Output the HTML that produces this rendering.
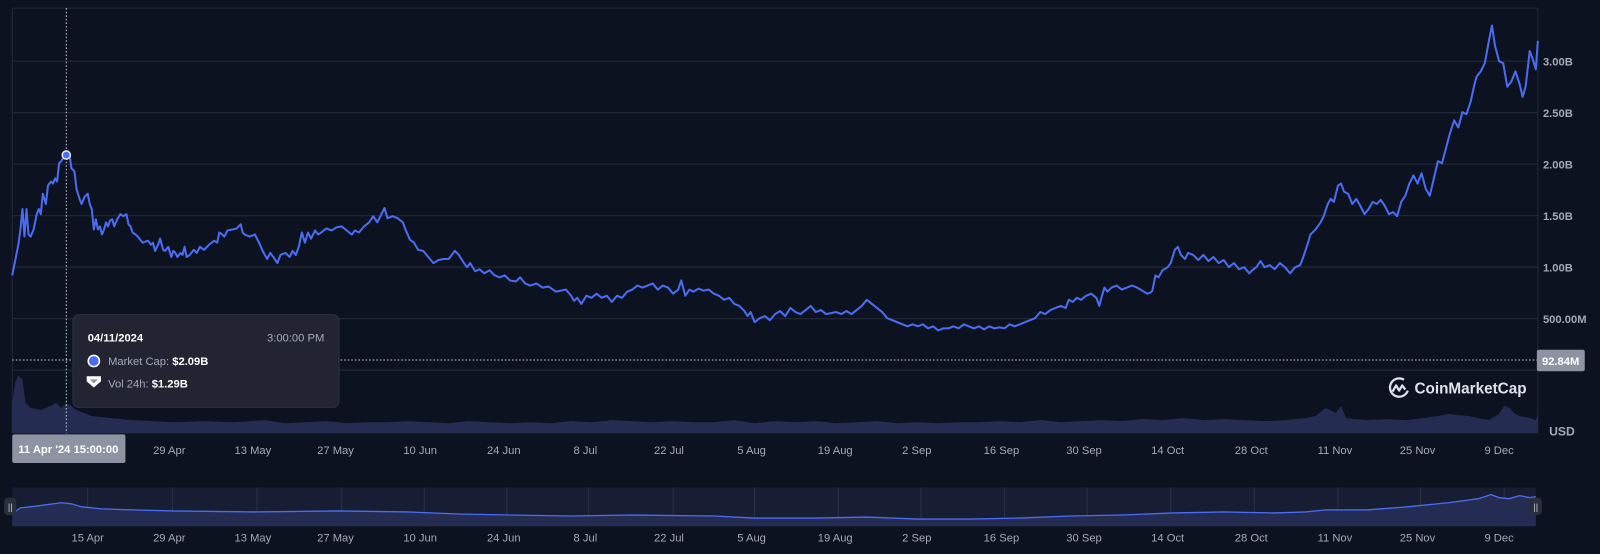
<!DOCTYPE html>
<html><head><meta charset="utf-8"><style>
html,body{margin:0;padding:0;background:#0d1220;width:1600px;height:554px;overflow:hidden}
#w{width:1569px;height:543px;transform:scale(1.0198);transform-origin:0 0;position:relative;font-family:"Liberation Sans",sans-serif}
svg text{font-family:"Liberation Sans",sans-serif}
</style></head><body><div id="w">
<svg width="1569" height="543" viewBox="0 0 1569 543" xmlns="http://www.w3.org/2000/svg">
<rect width="1569" height="543" fill="#0d1220"/>
<g stroke="#232938" stroke-width="1">
<line x1="12" y1="8" x2="1508" y2="8"/>
<line x1="12" y1="60" x2="1508" y2="60"/>
<line x1="12" y1="110.5" x2="1508" y2="110.5"/>
<line x1="12" y1="161" x2="1508" y2="161"/>
<line x1="12" y1="211.5" x2="1508" y2="211.5"/>
<line x1="12" y1="262" x2="1508" y2="262"/>
<line x1="12" y1="312.5" x2="1508" y2="312.5"/>
<line x1="12" y1="363" x2="1508" y2="363"/>
<line x1="12" y1="8" x2="12" y2="425"/>
<line x1="1508" y1="8" x2="1508" y2="425"/>
</g>
<!-- volume -->
<polygon fill="#283056" opacity="0.9" points="12,425 12,395 15,375 18,368 22,372 25,395 30,400 40,402 50,398 55,395 60,400 65,395 70,398 75,402 90,408 110,410 130,412 150,413 170,414 200,413 230,414 260,412 280,415 300,414 320,413 340,415 360,414 380,414 400,413 420,414 440,415 460,413 480,414 500,415 520,414 540,415 560,413 580,414 600,412 620,413 640,414 660,413 680,414 700,414 720,412 740,415 760,413 780,414 800,413 820,415 840,414 860,413 880,415 900,414 920,415 940,414 960,414 980,413 1000,414 1020,412 1040,414 1060,413 1080,412 1100,413 1120,411 1140,412 1160,410 1180,412 1200,411 1220,412 1240,413 1260,412 1280,410 1290,408 1300,400 1310,405 1315,398 1320,410 1340,412 1360,411 1380,412 1395,410 1410,408 1420,406 1430,407 1440,408 1450,410 1460,412 1470,406 1475,398 1480,400 1485,405 1490,408 1500,410 1506,412 1508,406 1508,425"/>
<!-- crosshair -->
<line x1="65" y1="8" x2="65" y2="425" stroke="#c8ccd6" stroke-dasharray="1.5,2" stroke-width="1"/>
<line x1="12" y1="353" x2="1508" y2="353" stroke="#c8ccd6" stroke-dasharray="1.5,2" stroke-width="1"/>
<!-- price line -->
<polyline fill="none" stroke="#4a6cf2" stroke-width="2" stroke-linejoin="round" points="12,270 15,255 18,240 20,225 22,205 24,232 26,205 28,230 30,232 33,225 36,210 38,205 40,210 42,190 45,200 47,182 50,178 52,180 54,175 56,178 58,160 60,158 62,155 65,152 68,150 70,165 73,168 75,185 78,195 80,200 83,193 86,190 88,200 90,205 92,225 94,215 96,225 98,222 100,230 102,225 104,218 106,222 108,216 110,215 112,222 115,215 118,210 121,212 124,210 126,220 128,222 130,228 133,230 135,232 140,238 145,236 148,240 150,238 152,246 155,240 157,234 160,245 162,246 165,242 168,252 170,246 172,248 174,252 177,248 179,250 181,242 183,252 186,250 190,245 193,248 196,242 200,245 205,240 210,236 213,238 215,228 218,230 220,232 223,226 228,225 232,224 236,220 238,228 240,230 245,232 250,230 255,240 258,247 262,254 265,248 268,252 272,258 275,250 280,248 284,252 287,246 290,250 293,242 296,228 299,238 302,228 305,234 309,226 312,230 315,228 320,224 325,226 330,223 335,222 340,226 345,230 348,226 352,228 357,222 362,218 366,212 370,218 374,210 377,204 380,214 385,212 390,214 395,218 398,226 402,235 406,238 410,245 415,246 420,252 425,258 430,255 435,254 440,254 443,250 446,246 450,250 455,258 458,262 461,258 466,266 470,264 475,268 480,265 485,270 490,272 495,270 500,275 506,276 510,272 515,278 520,280 526,278 532,282 538,281 545,286 550,285 555,284 560,290 563,295 566,292 570,298 575,290 580,292 585,288 590,292 595,290 600,296 605,290 610,292 615,286 620,284 625,280 630,282 635,280 640,278 645,284 650,280 655,282 660,288 665,284 668,275 672,290 676,284 680,286 685,283 690,285 695,284 700,288 705,290 710,294 715,292 720,298 725,300 730,305 733,310 736,306 740,316 745,312 750,310 755,314 760,308 765,305 770,310 775,302 780,306 785,308 790,304 795,300 800,306 805,304 810,308 815,307 820,306 825,308 830,305 835,308 840,304 845,300 850,294 855,298 860,302 865,306 870,312 875,314 880,316 885,318 890,320 895,318 900,320 905,318 910,322 915,320 920,324 925,322 930,322 935,320 940,322 945,318 950,320 955,322 960,320 965,323 970,320 975,322 980,321 985,322 990,318 995,320 1000,318 1005,316 1010,314 1015,312 1020,306 1025,308 1030,304 1035,302 1040,300 1045,302 1048,294 1052,296 1056,292 1060,294 1065,290 1070,288 1075,292 1078,300 1080,292 1083,282 1086,286 1090,282 1095,280 1100,284 1105,282 1110,280 1115,282 1120,285 1125,288 1128,287 1130,285 1133,270 1136,272 1140,265 1145,262 1148,258 1152,245 1155,242 1158,250 1162,254 1165,248 1170,250 1175,255 1180,250 1185,256 1190,252 1195,258 1200,255 1205,262 1210,258 1215,264 1220,262 1225,268 1228,265 1232,262 1236,256 1240,262 1245,260 1250,264 1255,258 1260,262 1265,268 1270,262 1275,260 1278,252 1282,240 1285,230 1290,225 1295,218 1298,212 1302,200 1305,195 1308,198 1312,182 1315,180 1318,188 1322,190 1326,200 1330,195 1334,202 1338,210 1342,205 1346,198 1350,200 1354,196 1358,202 1362,210 1366,208 1370,212 1374,198 1378,192 1382,180 1386,172 1390,180 1394,170 1398,185 1402,192 1406,175 1410,158 1414,160 1418,145 1422,130 1426,118 1430,125 1434,110 1438,112 1442,100 1446,82 1448,75 1452,70 1456,62 1460,40 1463,25 1466,45 1470,60 1474,62 1478,85 1482,80 1486,70 1490,82 1493,95 1496,85 1500,50 1503,58 1506,68 1508,40"/>
<circle cx="65" cy="152" r="4" fill="#4a6cf2" stroke="#e6e9f2" stroke-width="1.5"/>
<!-- y labels -->
<g fill="#a4a9ba" font-size="11" font-weight="bold">
<text x="1513" y="64">3.00B</text>
<text x="1513" y="114.5">2.50B</text>
<text x="1513" y="165">2.00B</text>
<text x="1513" y="215.5">1.50B</text>
<text x="1513" y="266">1.00B</text>
<text x="1513" y="316.5">500.00M</text>
<text x="1519" y="427" font-size="12">USD</text>
</g>
<rect x="1507" y="343" width="47" height="21" rx="2" fill="#8e93a3"/>
<text x="1512" y="358" fill="#fff" font-size="11" font-weight="bold">92.84M</text>
<!-- logo -->
<g transform="translate(1362,370)">
<circle cx="10" cy="10" r="9" fill="none" stroke="#dfe2ea" stroke-width="2.2" stroke-dasharray="44,14" transform="rotate(20 10 10)"/>
<path d="M3.5,14 L7,8 L10,13 L13,8 L16,12" fill="none" stroke="#dfe2ea" stroke-width="2.2" stroke-linejoin="round"/>
<text x="25" y="16" fill="#dfe2ea" font-size="15" font-weight="bold">CoinMarketCap</text>
</g>
<!-- x labels -->
<g fill="#a4a9ba" font-size="11" text-anchor="middle">
<text x="166" y="445">29 Apr</text><text x="248" y="445">13 May</text><text x="329" y="445">27 May</text><text x="412" y="445">10 Jun</text><text x="494" y="445">24 Jun</text><text x="574" y="445">8 Jul</text><text x="656" y="445">22 Jul</text><text x="737" y="445">5 Aug</text><text x="819" y="445">19 Aug</text><text x="899" y="445">2 Sep</text><text x="982" y="445">16 Sep</text><text x="1063" y="445">30 Sep</text><text x="1145" y="445">14 Oct</text><text x="1227" y="445">28 Oct</text><text x="1309" y="445">11 Nov</text><text x="1390" y="445">25 Nov</text><text x="1470" y="445">9 Dec</text>
</g>
<rect x="12" y="426" width="111" height="28" rx="2" fill="#8e93a3"/>
<text x="67" y="444" fill="#fff" font-size="11" font-weight="bold" text-anchor="middle">11 Apr '24 15:00:00</text>
<!-- tooltip -->
<rect x="71.5" y="308.5" width="261" height="91" rx="6" fill="#222531" stroke="#2c3040"/>
<text x="86" y="335" fill="#fff" font-size="11" font-weight="bold">04/11/2024</text>
<text x="318" y="335" fill="#a4a9ba" font-size="11" text-anchor="end">3:00:00 PM</text>
<circle cx="92" cy="354" r="5.5" fill="#4a6cf2" stroke="#fff" stroke-width="1.5"/>
<text x="106" y="358" fill="#a4a9ba" font-size="11">Market Cap: <tspan fill="#fff" font-weight="bold">$2.09B</tspan></text>
<path d="M85,369 L99,369 L99,374 L92,380 L85,374 Z" fill="#fff"/>
<path d="M88,372 L96,372 L92,376 Z" fill="#8e93a3"/>
<text x="106" y="380" fill="#a4a9ba" font-size="11">Vol 24h: <tspan fill="#fff" font-weight="bold">$1.29B</tspan></text>
<!-- navigator -->
<rect x="12" y="478" width="1494" height="38" fill="#171d33"/>
<g stroke="#2a3145"><line x1="86" y1="478" x2="86" y2="516"/><line x1="169" y1="478" x2="169" y2="516"/><line x1="252" y1="478" x2="252" y2="516"/><line x1="335" y1="478" x2="335" y2="516"/><line x1="416" y1="478" x2="416" y2="516"/><line x1="497" y1="478" x2="497" y2="516"/><line x1="577" y1="478" x2="577" y2="516"/><line x1="660" y1="478" x2="660" y2="516"/><line x1="740" y1="478" x2="740" y2="516"/><line x1="822" y1="478" x2="822" y2="516"/><line x1="903" y1="478" x2="903" y2="516"/><line x1="985" y1="478" x2="985" y2="516"/><line x1="1066" y1="478" x2="1066" y2="516"/><line x1="1148" y1="478" x2="1148" y2="516"/><line x1="1230" y1="478" x2="1230" y2="516"/><line x1="1312" y1="478" x2="1312" y2="516"/><line x1="1393" y1="478" x2="1393" y2="516"/><line x1="1475" y1="478" x2="1475" y2="516"/></g>
<polygon fill="#252c52" points="12,516 12,504 20,498 30,497 45,495 60,493 70,494 80,497 100,499 130,500 170,501 250,502 330,501 400,502 450,504 500,505 560,506 620,505 700,506 740,508 800,508 850,507 900,509 950,509 1000,508 1050,506 1100,505 1150,503 1200,502 1250,503 1280,502 1300,500 1340,500 1380,497 1420,493 1450,489 1462,485 1470,488 1480,489 1490,486 1500,488 1506,487 1506,516"/>
<polyline fill="none" stroke="#4a6cf2" stroke-width="1.3" points="12,504 20,498 30,497 45,495 60,493 70,494 80,497 100,499 130,500 170,501 250,502 330,501 400,502 450,504 500,505 560,506 620,505 700,506 740,508 800,508 850,507 900,509 950,509 1000,508 1050,506 1100,505 1150,503 1200,502 1250,503 1280,502 1300,500 1340,500 1380,497 1420,493 1450,489 1462,485 1470,488 1480,489 1490,486 1500,488 1506,487"/>
<rect x="4" y="488" width="12" height="17" rx="4" fill="#2a2f3d"/><text x="10" y="500" fill="#c8ccd6" font-size="9" text-anchor="middle">||</text>
<rect x="1500" y="488" width="12" height="17" rx="4" fill="#2a2f3d"/><text x="1506" y="500" fill="#c8ccd6" font-size="9" text-anchor="middle">||</text>
<g fill="#a4a9ba" font-size="11" text-anchor="middle">
<text x="86" y="531">15 Apr</text><text x="166" y="531">29 Apr</text><text x="248" y="531">13 May</text><text x="329" y="531">27 May</text><text x="412" y="531">10 Jun</text><text x="494" y="531">24 Jun</text><text x="574" y="531">8 Jul</text><text x="656" y="531">22 Jul</text><text x="737" y="531">5 Aug</text><text x="819" y="531">19 Aug</text><text x="899" y="531">2 Sep</text><text x="982" y="531">16 Sep</text><text x="1063" y="531">30 Sep</text><text x="1145" y="531">14 Oct</text><text x="1227" y="531">28 Oct</text><text x="1309" y="531">11 Nov</text><text x="1390" y="531">25 Nov</text><text x="1470" y="531">9 Dec</text>
</g>
</svg>
</div></body></html>
